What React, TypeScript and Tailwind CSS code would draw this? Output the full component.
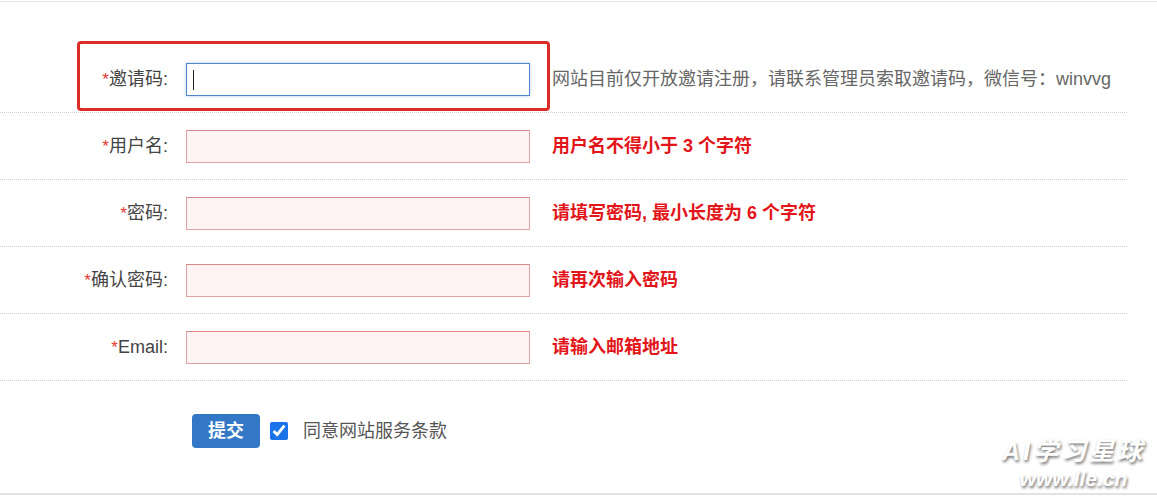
import React from 'react';

const font = '"Liberation Sans", "Noto Sans CJK SC", sans-serif';

type Row = { label: string; hint: string; error: boolean; focus?: boolean };

const rows: Row[] = [
  { label: '邀请码', hint: '网站目前仅开放邀请注册，请联系管理员索取邀请码，微信号：winvvg', error: false, focus: true },
  { label: '用户名', hint: '用户名不得小于 3 个字符', error: true },
  { label: '密码', hint: '请填写密码, 最小长度为 6 个字符', error: true },
  { label: '确认密码', hint: '请再次输入密码', error: true },
  { label: 'Email', hint: '请输入邮箱地址', error: true },
];

const FieldRow: React.FC<{ row: Row }> = ({ row }) => (
  <div className="flex h-[67px] items-center border-b border-dotted border-[#cfcfcf]">
    <label className="w-[170px] pr-[2px] text-right text-[18px] text-[#444]">
      <span className="text-[17px] text-[#e53935]">*</span>
      {row.label}:
    </label>
    <div className="relative ml-[16px]">
      {row.focus ? (
        <>
          <input
            className="block h-[33px] w-[344px] border border-[#4f89c9] bg-white shadow-[0_0_3px_rgba(80,140,210,0.45)] outline-none"
            defaultValue=""
          />
          <span className="absolute left-[7px] top-[7px] h-[20px] w-px bg-[#222]" />
        </>
      ) : (
        <input
          className="block h-[33px] w-[344px] border border-[#e3a3a3] border-t-[#d98686] bg-[#fff4f3] outline-none"
          defaultValue=""
        />
      )}
    </div>
    <span
      className={
        row.error
          ? 'ml-[22px] text-[18px] font-bold text-[#e2161a]'
          : 'ml-[22px] text-[18px] text-[#666]'
      }
    >
      {row.hint}
    </span>
  </div>
);

export default function App() {
  return (
    <div className="relative h-[501px] w-[1157px] overflow-hidden bg-white" style={{ fontFamily: font }}>
      <div className="mt-px h-px bg-[#e4e4e4]" />
      <div className="w-[1127px] pt-[44px]">
        {rows.map((r) => (
          <FieldRow key={r.label} row={r} />
        ))}
        <div className="flex h-[112px] items-start pl-[192px] pt-[33px]">
          <button className="h-[34px] w-[68px] rounded-[4px] bg-[#3278c6] text-[18px] font-bold text-white">
            提交
          </button>
          <input type="checkbox" defaultChecked className="ml-[10px] mt-[8px] h-[18px] w-[18px] accent-[#1a73e8]" />
          <span className="ml-[15px] mt-[4px] text-[18px] text-[#555]">同意网站服务条款</span>
        </div>
      </div>
      <div className="h-[2px] bg-[#e2e2e2]" />

      {/* annotation box */}
      <div className="absolute left-[77px] top-[41px] h-[70px] w-[473px] rounded-[4px] border-[3px] border-[#dc2c26]" />

      {/* watermark */}
      <div className="absolute left-[1002px] top-[436px] flex flex-col items-center italic text-white [text-shadow:1px_2px_3px_rgba(0,0,0,0.55)]">
        <span className="text-[25px] font-bold leading-[30px] tracking-[3px]">AI学习星球</span>
        <span className="text-[21px] font-bold leading-[26px]">www.lle.cn</span>
      </div>
    </div>
  );
}
